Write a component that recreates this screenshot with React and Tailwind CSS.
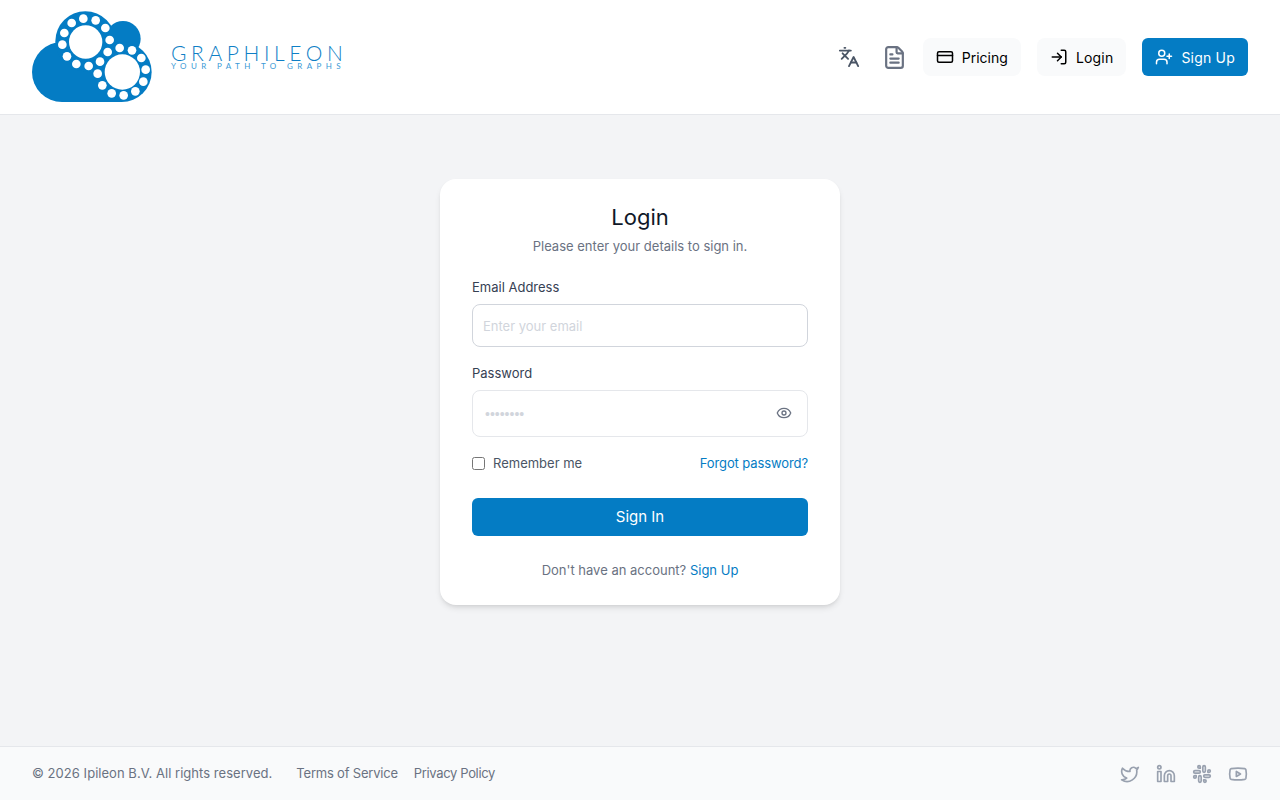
import { CreditCard, Eye, FileText, Languages, Linkedin, LogIn, Slack, Twitter, UserPlus, Youtube } from 'lucide-react';

const ringDots = [
  [131, 45], [166, 32], [203, 37], [232, 60], [245, 96], [239, 132], [216, 161], [182, 174], [145, 168], [117, 145], [103, 110], [109, 75],
  [275, 120], [312, 127], [340, 150], [353, 185], [346, 221], [322, 250], [287, 262], [251, 256], [223, 232], [209, 197],
];

function Logo() {
  return (
    <div className="flex items-center">
      <svg width="120" height="98" viewBox="12 0 360 294">
        <g fill="#047cc4">
          <circle cx="102" cy="192" r="90" />
          <circle cx="172" cy="100" r="90" />
          <circle cx="285" cy="92" r="53" />
          <circle cx="281" cy="192" r="90" />
          <path d="M102 192 H281 V282 H102 Z" />
        </g>
        <g fill="#fff">
          <circle cx="173" cy="102" r="50" />
          <circle cx="283" cy="192" r="53" />
          {ringDots.map(([cx, cy]) => (
            <circle key={`${cx}-${cy}`} cx={cx} cy={cy} r="13" />
          ))}
        </g>
      </svg>
      <div className="ml-[19px] font-['Lato',sans-serif] text-[#0f7fc6]">
        <div className="text-[21px] leading-[18px] font-light tracking-[4.6px]">GRAPHILEON</div>
        <div className="text-[8px] leading-[8px] tracking-[4.4px] text-[#3a9ad6]">YOUR PATH TO GRAPHS</div>
      </div>
    </div>
  );
}

export default function App() {
  return (
    <div className="flex h-[800px] flex-col bg-gray-100 font-['Inter',sans-serif]">
      <header className="flex h-[115px] items-center justify-between border-b border-gray-200 bg-white px-8">
        <Logo />
        <nav className="flex items-center gap-4">
          <button className="mr-[6px] text-gray-600">
            <Languages className="h-[22px] w-[22px]" />
          </button>
          <button className="text-gray-500">
            <FileText className="h-[25px] w-[25px]" strokeWidth={2.1} />
          </button>
          <a className="flex h-[38px] items-center gap-2 rounded-lg bg-gray-50 px-[13px] text-[14px] text-black">
            <CreditCard className="h-[18px] w-[18px]" />
            Pricing
          </a>
          <a className="flex h-[38px] items-center gap-2 rounded-lg bg-gray-50 px-[13px] text-[14px] tracking-[0.2px] text-black">
            <LogIn className="h-[18px] w-[18px]" />
            Login
          </a>
          <a className="flex h-[38px] items-center gap-2 rounded-md bg-[#047cc4] px-[13px] text-[14px] tracking-[0.2px] text-white">
            <UserPlus className="h-[18px] w-[18px]" />
            Sign Up
          </a>
        </nav>
      </header>

      <main className="flex flex-1 justify-center pt-16">
        <div className="h-[426px] w-[400px] rounded-2xl bg-white px-8 pt-6 shadow-md">
          <h1 className="text-center text-[22px] leading-7 text-gray-900">Login</h1>
          <p className="mt-[5px] text-center text-[13px] leading-5 text-gray-500">Please enter your details to sign in.</p>

          <label className="mt-[21px] block text-[13px] leading-5 text-gray-700">Email Address</label>
          <input
            className="mt-[7px] block h-[43px] w-full rounded-lg border border-gray-300 px-[10px] text-[13px] outline-none placeholder:text-gray-300"
            placeholder="Enter your email"
          />

          <label className="mt-4 block text-[13px] leading-5 text-gray-700">Password</label>
          <div className="relative mt-[7px]">
            <input
              type="password"
              className="block h-[47px] w-full rounded-lg border border-gray-200 px-3 font-['Liberation_Sans',sans-serif] text-[14px] outline-none placeholder:text-gray-300"
              placeholder="••••••••"
            />
            <button className="absolute top-[15px] right-4 text-gray-500">
              <Eye className="h-4 w-4" />
            </button>
          </div>

          <div className="mt-4 flex items-center justify-between text-[13px] leading-5">
            <label className="flex items-center gap-2 text-gray-600">
              <input type="checkbox" className="h-[13px] w-[13px]" />
              Remember me
            </label>
            <a className="tracking-[-0.1px] text-[#047cc4]">Forgot password?</a>
          </div>

          <button className="mt-[25px] h-[38px] w-full rounded-md bg-[#047cc4] text-[15px] text-white">Sign In</button>

          <p className="mt-6 text-center text-[13px] leading-5 text-gray-500">
            Don't have an account? <a className="text-[#047cc4]">Sign Up</a>
          </p>
        </div>
      </main>

      <footer className="flex h-[54px] items-center justify-between border-t border-gray-200 bg-gray-50 px-8 text-[13px] text-gray-500">
        <div className="flex items-center">
          <span className="tracking-[0.04px]">© 2026 Ipileon B.V. All rights reserved.</span>
          <a className="ml-6 tracking-[-0.2px]">Terms of Service</a>
          <a className="ml-4 tracking-[-0.35px]">Privacy Policy</a>
        </div>
        <div className="flex items-center gap-4 text-gray-400">
          <Twitter className="h-5 w-5" />
          <Linkedin className="h-5 w-5" />
          <Slack className="h-5 w-5" />
          <Youtube className="h-5 w-5" />
        </div>
      </footer>
    </div>
  );
}
